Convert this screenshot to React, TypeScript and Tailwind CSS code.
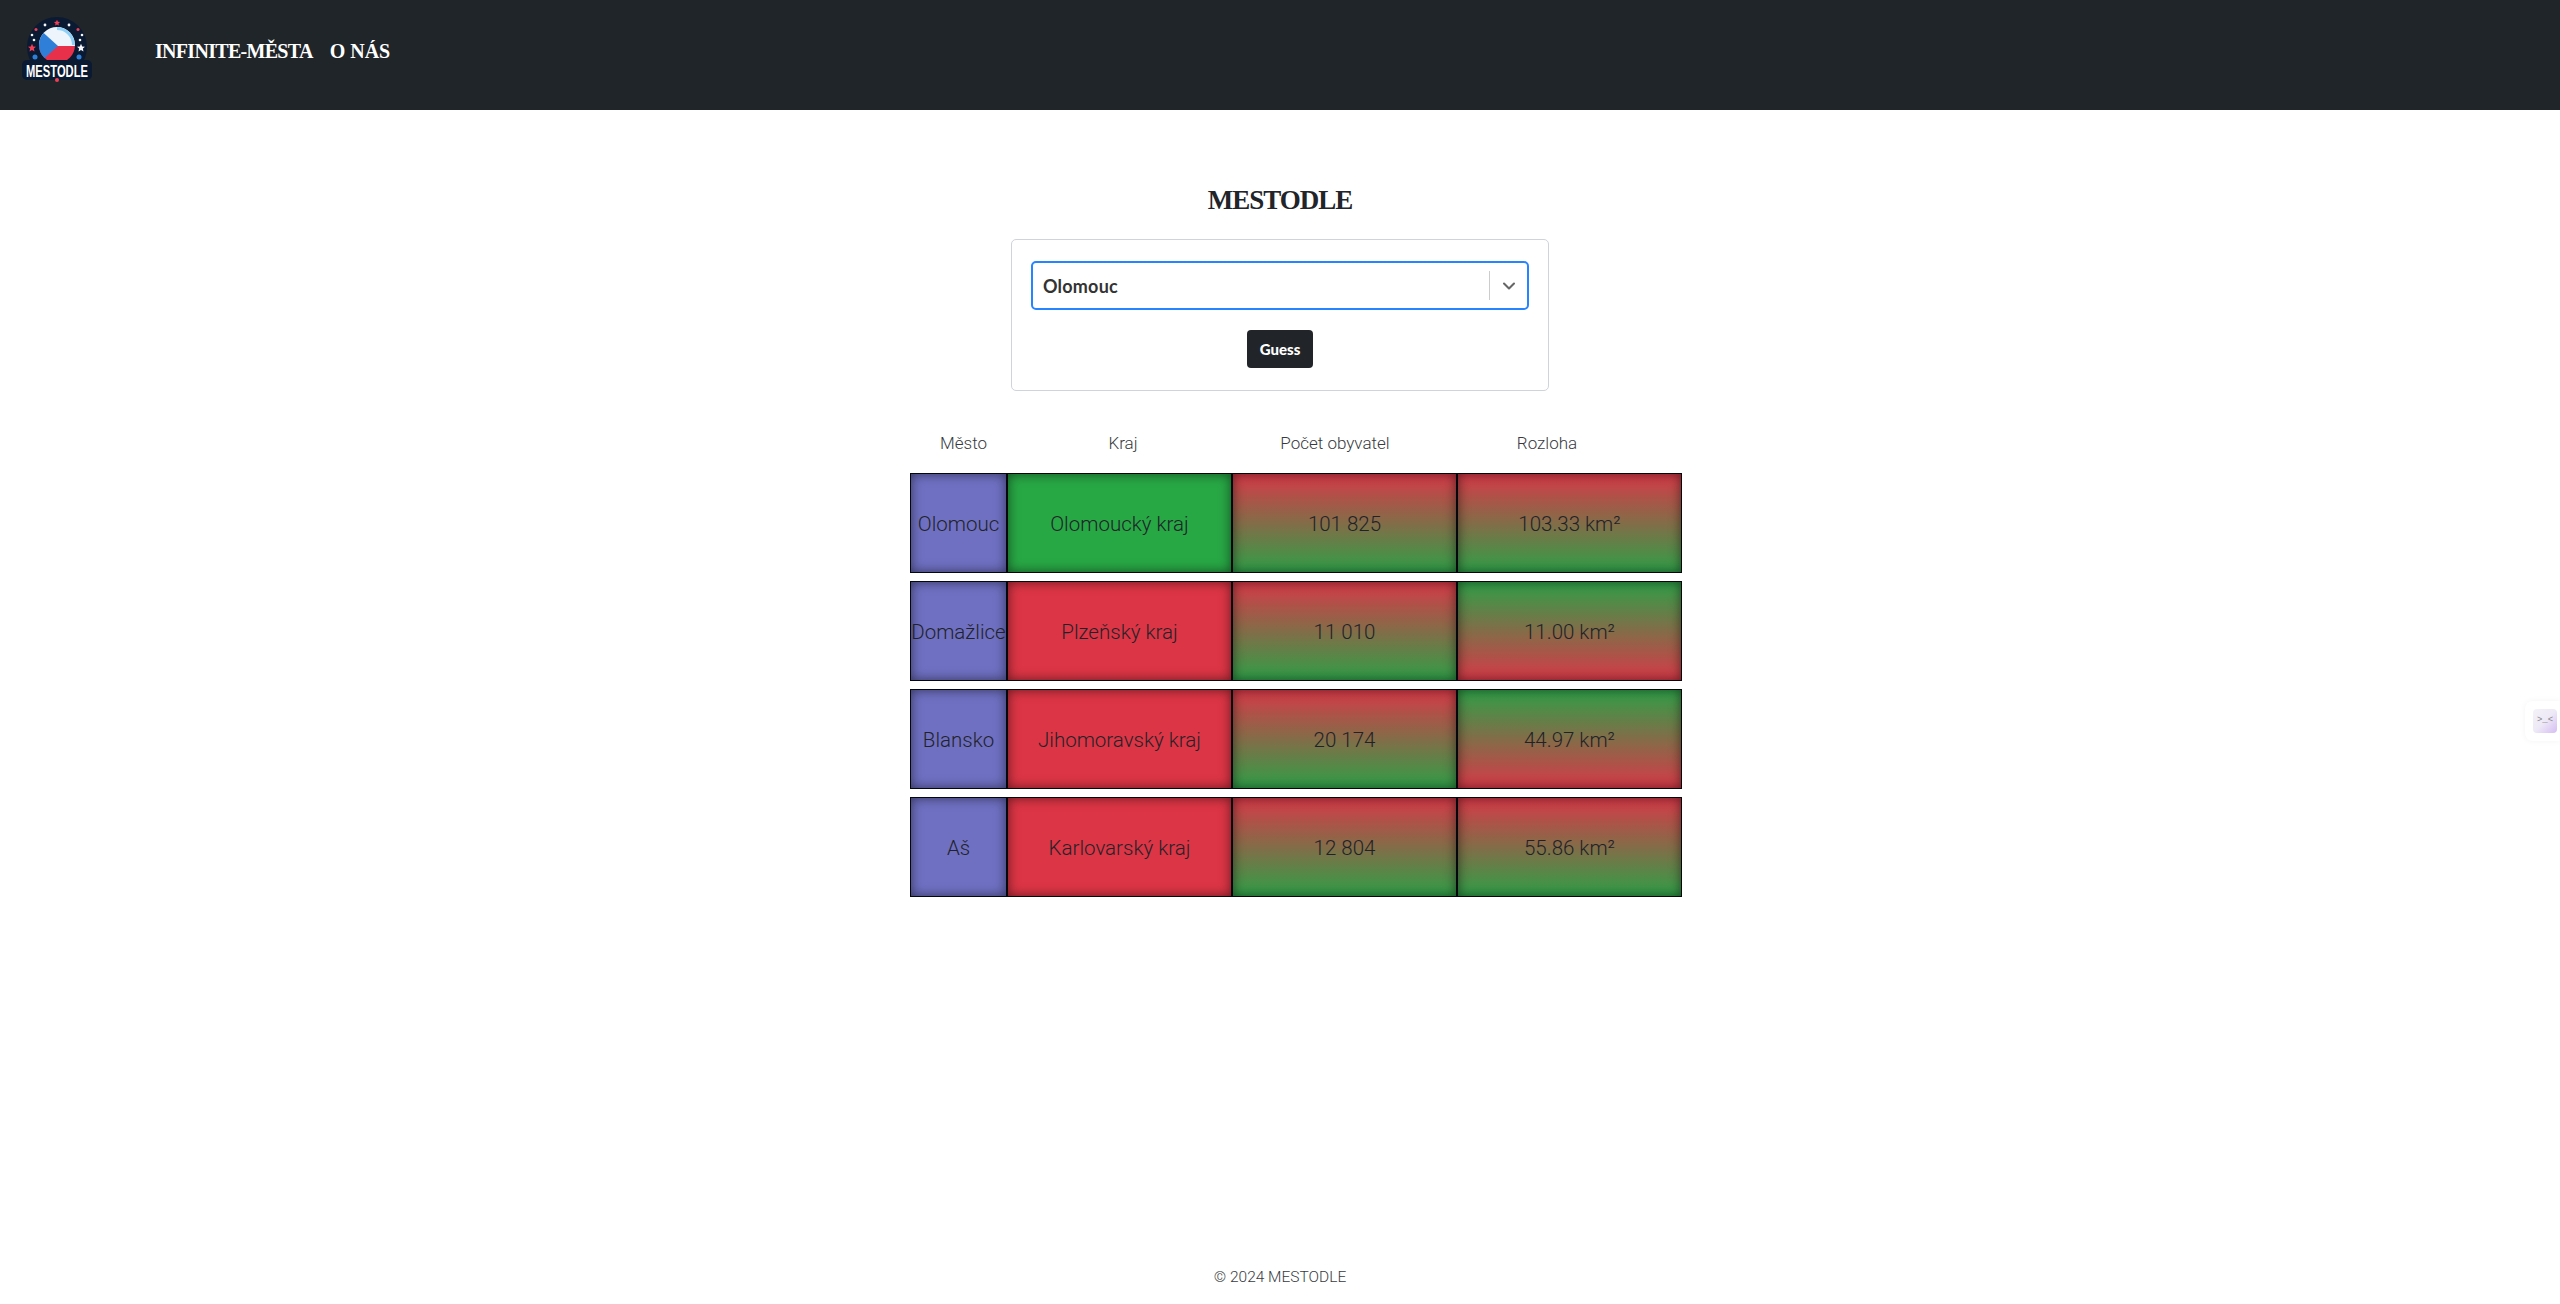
import React from 'react';
import { ChevronDown } from 'lucide-react';

type Dir = 'redGreen' | 'greenRed';

const rows: { city: string; region: string; regionOk: boolean; pop: string; popDir: Dir; area: string; areaDir: Dir }[] = [
  { city: 'Olomouc', region: 'Olomoucký kraj', regionOk: true, pop: '101 825', popDir: 'redGreen', area: '103.33 km²', areaDir: 'redGreen' },
  { city: 'Domažlice', region: 'Plzeňský kraj', regionOk: false, pop: '11 010', popDir: 'redGreen', area: '11.00 km²', areaDir: 'greenRed' },
  { city: 'Blansko', region: 'Jihomoravský kraj', regionOk: false, pop: '20 174', popDir: 'redGreen', area: '44.97 km²', areaDir: 'greenRed' },
  { city: 'Aš', region: 'Karlovarský kraj', regionOk: false, pop: '12 804', popDir: 'redGreen', area: '55.86 km²', areaDir: 'redGreen' },
];

const cellBase =
  'flex items-center justify-center border border-[#05070f] pt-[2px] text-[20.500px] font-light text-[#1f2329] shadow-[inset_0_0_12px_rgba(0,0,0,0.55)] whitespace-nowrap';

// srgb interpolation gives the muddy brown midpoint of the original
const gradient = (dir: Dir) =>
  dir === 'redGreen'
    ? 'bg-linear-to-b/srgb from-[#d63a48] to-[#309f48]'
    : 'bg-linear-to-b/srgb from-[#309f48] to-[#d63a48]';

const Star = ({ x, y, r, fill }: { x: number; y: number; r: number; fill: string }) => (
  <path
    transform={`translate(${x} ${y}) scale(${r})`}
    d="M0 -1 L0.29 -0.36 L0.95 -0.31 L0.45 0.14 L0.59 0.81 L0 0.47 L-0.59 0.81 L-0.45 0.14 L-0.95 -0.31 L-0.29 -0.36 Z"
    fill={fill}
  />
);

const Logo = () => (
  <svg width="72" height="70" viewBox="0 0 72 70" className="block overflow-visible">
    <defs>
      <clipPath id="ball">
        <circle cx="35" cy="28" r="18" />
      </clipPath>
    </defs>
    <circle cx="35" cy="30" r="30" fill="#0b1a33" />
    <g clipPath="url(#ball)">
      <rect x="15" y="8" width="40" height="21" fill="#eef4fb" />
      <rect x="15" y="29" width="40" height="20" fill="#e8304a" />
      <path d="M15 10 L36 29 L15 48 Z" fill="#2f7fd8" />
      <path d="M35 10 A18 18 0 0 1 53 28 L50 28 A15 15 0 0 0 35 13 Z" fill="#8fd0f7" />
    </g>
    <Star x={35} y={6} r={3.2} fill="#ef3e55" />
    <circle cx="23" cy="8" r="1.4" fill="#f4f6fa" />
    <circle cx="47" cy="8" r="1.4" fill="#f4f6fa" />
    <circle cx="14" cy="12.500" r="1.500" fill="#ef3e55" />
    <circle cx="56" cy="12.500" r="1.500" fill="#ef3e55" />
    <circle cx="10" cy="18" r="1.300" fill="#f4f6fa" />
    <circle cx="60" cy="18" r="1.300" fill="#f4f6fa" />
    <circle cx="12" cy="23" r="1.300" fill="#f4f6fa" />
    <circle cx="58" cy="23" r="1.300" fill="#f4f6fa" />
    <Star x={10} y={31} r={4.2} fill="#ef3e55" />
    <Star x={59} y={31} r={4.2} fill="#f4f6fa" />
    <circle cx="13" cy="40" r="2.500" fill="#2f7fd8" />
    <circle cx="57" cy="40" r="2.500" fill="#2f7fd8" />
    <rect x="0" y="43" width="70" height="20" rx="5" fill="#0b1a33" />
    <text
      x="35"
      y="60"
      textAnchor="middle"
      fill="#fff"
      fontSize="17"
      fontWeight="700"
      textLength="62"
      lengthAdjust="spacingAndGlyphs"
      fontFamily="'Liberation Sans', sans-serif"
    >
      MESTODLE
    </text>
    <circle cx="35" cy="63" r="2" fill="#ef3e55" />
  </svg>
);

export default function App() {
  return (
    <div className="flex min-h-[1304px] flex-col bg-white font-['Roboto',sans-serif] text-[#212529]">
      <nav className="flex h-[110px] items-start bg-[#1f2529] pl-[22px] pt-[17px]">
        <Logo />
        <div className="ml-[61px] mt-[20px] flex gap-[17px] font-['Liberation_Serif',serif] text-[20px] font-bold leading-[28px] tracking-[-0.7px] text-white">
          <a>INFINITE-MĚSTA</a>
          <a className="tracking-normal">O NÁS</a>
        </div>
      </nav>

      <main className="flex flex-col items-center pt-[73px]">
        <h1 className="font-['Liberation_Serif',serif] text-[27px] font-bold leading-[34px] tracking-[-1px] text-[#212529]">
          MESTODLE
        </h1>

        <div className="mt-[22px] flex h-[152px] w-[538px] flex-col items-center rounded-[5px] border border-[#ced4da] px-[19px] pt-[21px]">
          <div className="flex h-[49px] w-full items-center rounded-[5px] border-2 border-[#2684ff] pl-[10px]">
            <span className="flex-1 pt-[1px] font-['Lato',sans-serif] text-[18px] font-bold tracking-[0.2px] text-[#333]">
              Olomouc
            </span>
            <span className="h-[29px] w-px bg-[#ccc]" />
            <span className="flex w-[37px] justify-center text-[#666]">
              <ChevronDown size={20} strokeWidth={2.5} />
            </span>
          </div>
          <button className="mt-[20px] h-[38px] w-[66px] rounded-[4px] bg-[#212529] font-['Lato',sans-serif] text-[15px] font-black text-white">
            Guess
          </button>
        </div>

        <div className="ml-[32px] mt-[23px] w-[772px] text-[#373b40]">
          <div className="grid h-[59px] grid-cols-[107px_212px_212px_212px] items-center text-center text-[17px] font-light leading-none">
            <span>Město</span>
            <span>Kraj</span>
            <span>Počet obyvatel</span>
            <span>Rozloha</span>
          </div>
          <div className="flex flex-col gap-[8px]">
            {rows.map((r) => (
              <div key={r.city} className="grid h-[100px] grid-cols-[97px_225px_225px_225px]">
                <div className={`${cellBase} bg-[#6f70c2]`}>{r.city}</div>
                <div className={`${cellBase} ${r.regionOk ? 'bg-[#28a745]' : 'bg-[#dc3545]'}`}>{r.region}</div>
                <div className={`${cellBase} ${gradient(r.popDir)}`}>{r.pop}</div>
                <div className={`${cellBase} ${gradient(r.areaDir)}`}>{r.area}</div>
              </div>
            ))}
          </div>
        </div>
      </main>

      <footer className="mt-auto pb-[17px] text-center text-[15.500px] font-light leading-[20px] text-[#373b40]">
        © 2024 MESTODLE
      </footer>

      {/* floating extension widget on the right edge */}
      <div className="fixed right-0 top-[701px] flex h-[40px] w-[35px] items-center rounded-l-[8px] bg-white pl-[8px] shadow-[0_0_6px_rgba(0,0,0,0.05)]">
        <div className="flex h-[24px] w-[24px] items-center justify-center rounded-[4px] bg-gradient-to-br from-[#f4f2f8] via-[#eee9f6] to-[#d5bdf2] font-['Liberation_Mono',monospace] text-[9px] text-[#888]">
          {'>_<'}
        </div>
      </div>
    </div>
  );
}
